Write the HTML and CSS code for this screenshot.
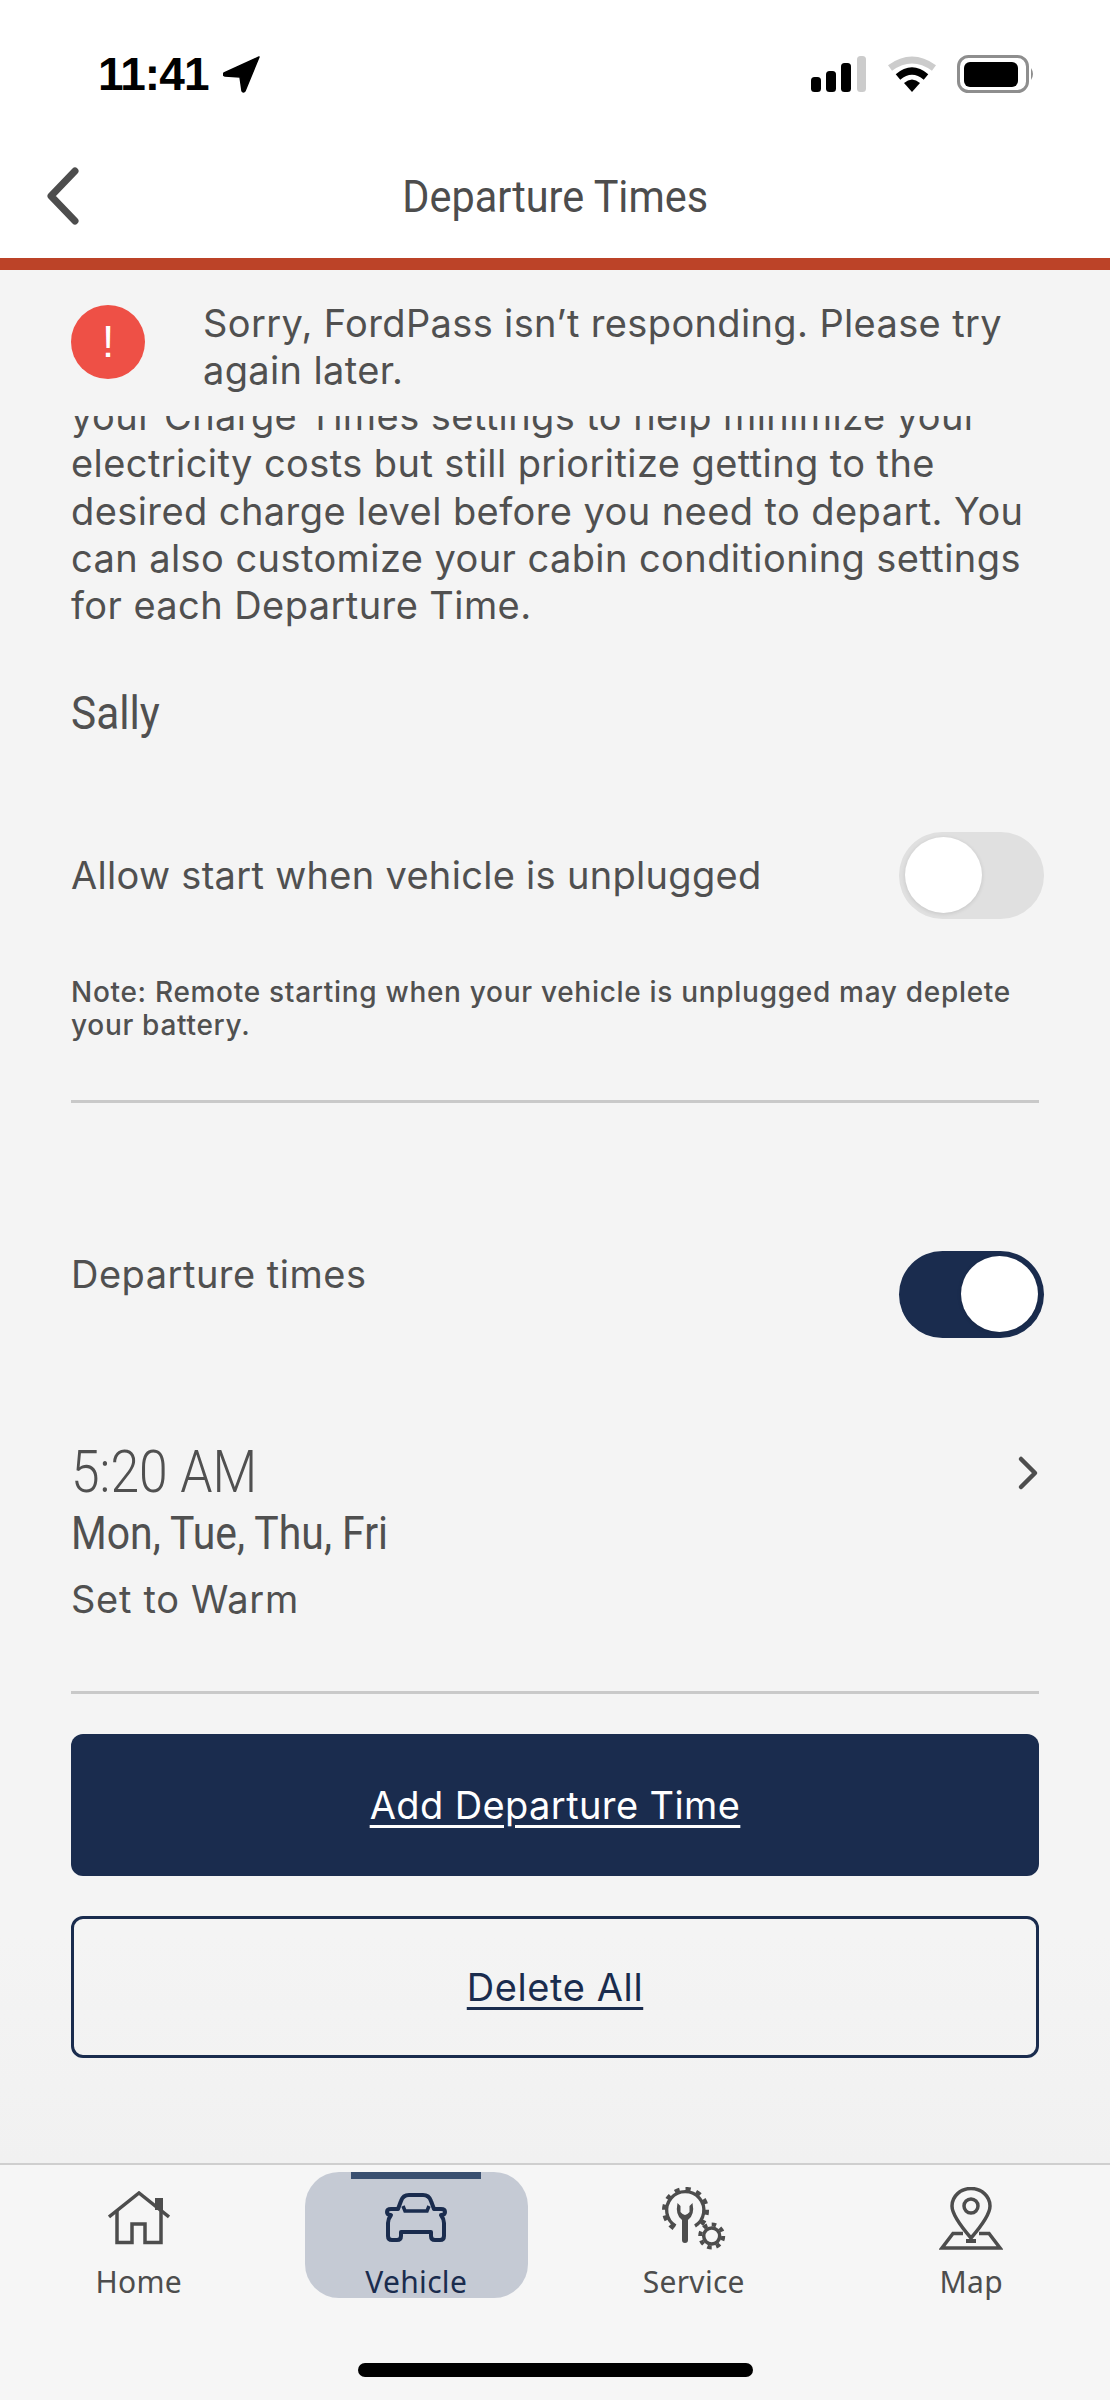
FILE: index.html
```html
<!DOCTYPE html>
<html lang="en">
<head>
<meta charset="utf-8">
<title>Departure Times</title>
<link rel="stylesheet" href="styles.css">
</head>
<body>
<div class="screen">
  <div class="status">
    <div class="status-left">
      <span class="clock">11:41</span>
      <svg class="arrow" width="38" height="37" viewBox="0 0 38 37"><path d="M36 1 L1 17 Q-1 19 2 20 L17 21 L19 35 Q20 37 22 35 Z" fill="#000" stroke="#000" stroke-width="1.5" stroke-linejoin="round"/></svg>
    </div>
    <div class="status-right">
      <svg class="signal" width="56" height="36" viewBox="0 0 56 36"><rect x="0" y="21" width="10" height="15" rx="3.5" fill="#000"/><rect x="15" y="15" width="10" height="21" rx="3.5" fill="#000"/><rect x="30" y="7" width="10" height="29" rx="3.5" fill="#000"/><rect x="46" y="0" width="9" height="36" rx="3.5" fill="#ccc"/></svg>
      <svg class="wifi" width="48" height="36" viewBox="0 0 48 36"><path d="M2 12 Q24 -4 46 12" fill="none" stroke="#ccc" stroke-width="7"/><path d="M10 21 Q24 9 38 21" fill="none" stroke="#000" stroke-width="7"/><path d="M16 27 Q24 20 32 27 L24 36 Z" fill="#000"/></svg>
      <svg class="battery" width="78" height="38" viewBox="0 0 78 38"><rect x="1.5" y="1.5" width="69" height="35" rx="10" fill="none" stroke="#8e8e8e" stroke-width="3"/><rect x="7" y="7" width="54" height="25" rx="6" fill="#000"/><path d="M74 13 Q78 19 74 25 Z" fill="#8e8e8e"/></svg>
    </div>
  </div>
  <header class="topbar">
    <svg class="back" width="33" height="58" viewBox="0 0 33 58"><path d="M29 4 L5 29 L29 54" fill="none" stroke="#4d4d4d" stroke-width="7" stroke-linecap="round" stroke-linejoin="round"/></svg>
    <h1 class="title">Departure Times</h1>
  </header>
  <div class="redbar"></div>
  <main class="content">
    <div class="alert">
      <div class="alert-icon">!</div>
      <p class="alert-text">Sorry, FordPass isn’t responding. Please try again later.</p>
    </div>
    <div class="scroll">
      <p class="intro">your Charge Times settings to help minimize your electricity costs but still prioritize getting to the desired charge level before you need to depart. You can also customize your cabin conditioning settings for each Departure Time.</p>
      <h2 class="name">Sally</h2>
      <div class="row row-allow">
        <span class="label">Allow start when vehicle is unplugged</span>
        <span class="toggle"><span class="knob"></span></span>
      </div>
      <p class="note">Note: Remote starting when your vehicle is unplugged may deplete your battery.</p>
      <div class="rule"></div>
      <div class="row row-dep">
        <span class="label label-dep">Departure times</span>
        <span class="toggle toggle-on"><span class="knob"></span></span>
      </div>
      <div class="entry">
        <div class="entry-info">
          <div class="entry-time">5:20 AM</div>
          <div class="entry-days">Mon, Tue, Thu, Fri</div>
          <div class="entry-mode">Set to Warm</div>
        </div>
        <svg class="chev" width="22" height="36" viewBox="0 0 22 36"><path d="M4 4 L18 18 L4 32" fill="none" stroke="#4d4d4d" stroke-width="4.5" stroke-linecap="round" stroke-linejoin="round"/></svg>
      </div>
      <div class="rule"></div>
      <a class="btn btn-primary">Add Departure Time</a>
      <a class="btn btn-outline">Delete All</a>
    </div>
  </main>
  <nav class="nav">
    <div class="tabs">
      <div class="tab">
        <span class="tab-icon"><svg width="62" height="54" viewBox="0 0 62 54"><path d="M1 26 L31 2 L61 26" fill="none" stroke="#4d4d4d" stroke-width="3.5"/><path d="M9 20 V51.5 H24 V33 H37 V51.5 H53 V7" fill="none" stroke="#4d4d4d" stroke-width="3.5"/><rect x="47" y="7" width="8" height="12" fill="#4d4d4d"/></svg></span>
        <span class="tab-label">Home</span>
      </div>
      <div class="tab tab-active">
        <span class="tab-mark"></span>
        <span class="tab-icon"><svg width="62" height="50" viewBox="0 0 62 50"><path d="M13 16 L16 8 Q18 2 24 2 H38 Q44 2 46 8 L49 16 H56 Q60 16 60 19 Q60 22 56 22 Q59 26 59 30 V43 Q59 47 55 47 H50 Q46 47 46 43 V39 H16 V43 Q16 47 12 47 H7 Q3 47 3 43 V30 Q3 26 6 22 Q2 22 2 19 Q2 16 6 16 Z" fill="none" stroke="#1a2c4e" stroke-width="4" stroke-linejoin="round"/><path d="M18 13 L20 18 H42 L44 13" fill="none" stroke="#1a2c4e" stroke-width="3.5"/></svg></span>
        <span class="tab-label">Vehicle</span>
      </div>
      <div class="tab">
        <span class="tab-icon"><svg width="64" height="63" viewBox="0 0 64 63" fill="none" stroke="#4d4d4d"><path d="M13.5 39 A18.6 18.6 0 1 1 33 39" stroke-width="3.3"/><path d="M12 41 A21 21 0 1 1 35 41" stroke-width="5" pathLength="60" stroke-dasharray="2.8 3.2"/><path d="M15.5 16 Q13 28 20 33 V53 Q20 56 23 56 Q26 56 26 53 V33 Q33 28 30.5 16 L27.5 19 V25 Q25 28 23 28 Q21 28 18.5 25 V19 Z" fill="#4d4d4d" stroke="none"/><circle cx="49.7" cy="49" r="8" stroke-width="3.5"/><circle cx="49.7" cy="49" r="11.5" stroke-width="4" pathLength="48" stroke-dasharray="3 3"/></svg></span>
        <span class="tab-label">Service</span>
      </div>
      <div class="tab">
        <span class="tab-icon"><svg width="64" height="63" viewBox="0 0 64 63" fill="none" stroke="#4d4d4d" stroke-width="3.5"><path d="M32 51 Q13 29 13 19 A19 17.5 0 0 1 51 19 Q51 29 32 51 Z" stroke-linejoin="round"/><circle cx="32" cy="19" r="7"/><path d="M24 46.5 H14 L3 61 H61 L50 46.5 H40"/><path d="M27 54 H37" stroke-width="4"/></svg></span>
        <span class="tab-label">Map</span>
      </div>
    </div>
    <div class="home-bar"></div>
  </nav>
</div>
</body>
</html>
```

FILE: styles.css
```css
* { box-sizing: border-box; }
html, body { margin: 0; padding: 0; }
body { width: 1110px; height: 2400px; overflow: hidden; background: #f4f4f4; font-family: Inter, "Liberation Sans", sans-serif; color: #505050; }
.screen { width: 1110px; height: 2400px; display: flex; flex-direction: column; }

.status { height: 130px; background: #fff; display: flex; justify-content: space-between; padding: 55px 75px 0 98px; flex: none; }
.status-left { display: flex; align-items: flex-start; gap: 14px; height: 38px; }
.clock { font: 700 46px/38px "Liberation Sans", sans-serif; color: #000; letter-spacing: -0.9px; }
.arrow { margin-top: 1px; }
.status-right { display: flex; align-items: flex-start; }
.signal { margin: 1px 21px 0 0; }
.wifi { margin: 1px 21px 0 0; }

.topbar { height: 128px; background: #fff; flex: none; display: flex; align-items: center; justify-content: center; position: relative; }
.back { position: absolute; left: 46px; top: 37px; }
.title { margin: 6px 0 0; font: 400 45px/60px Roboto, sans-serif; color: #4d4d4d; transform: scaleX(.92); }
.redbar { height: 12px; background: #bc4328; flex: none; }

.content { flex: 1; min-height: 0; display: flex; flex-direction: column; background: linear-gradient(#f4f4f4 88%, #f1f1f1); }
.alert { height: 146px; flex: none; display: flex; align-items: flex-start; padding: 35px 71px 0; gap: 58px; }
.alert-icon { width: 74px; height: 74px; border-radius: 50%; background: #ee5046; color: #fff; font: 400 44px/74px "Liberation Sans", sans-serif; text-align: center; flex: none; }
.alert-text { margin: -5px 0 0; font-size: 38px; line-height: 47px; letter-spacing: 0.36px; }

.scroll { flex: 1; min-height: 0; overflow: hidden; padding: 0 71px; }
.intro { margin: -23px 0 0; font-size: 38px; line-height: 47.3px; letter-spacing: 0.42px; }
.name { margin: 57px 0 0; font: 400 46px/54px Roboto, sans-serif; transform: scaleX(.92); transform-origin: left center; }
.row { display: flex; justify-content: space-between; }
.row-allow { align-items: center; margin: 92px -5px 0 0; }
.label { font-size: 38px; line-height: 47px; letter-spacing: 0.3px; }
.label-dep { letter-spacing: 0.5px; }
.toggle { width: 145px; height: 87px; border-radius: 44px; background: #e0e0e0; padding: 5px 6px; display: flex; flex: none; }
.knob { width: 77px; height: 76px; border-radius: 50%; background: #fff; box-shadow: 0 1px 4px rgba(0,0,0,.12); }
.toggle-on { background: #1a2c4e; justify-content: flex-end; }
.note { margin: 57px 0 0; font-size: 28px; line-height: 33px; font-weight: 500; letter-spacing: 0.7px; }
.rule { height: 3px; background: #c9c9c9; }
.note + .rule { margin-top: 58px; }
.row-dep { margin: 148px -5px 0 0; align-items: flex-start; }
.entry { display: flex; justify-content: space-between; margin-top: 99px; }
.entry-time { font: 300 60px/70px Roboto, sans-serif; transform: scaleX(.86); transform-origin: left center; }
.entry-days { font: 400 46px/52px Roboto, sans-serif; transform: scaleX(.89); transform-origin: left center; }
.entry-mode { font-size: 38px; line-height: 47px; margin-top: 17px; letter-spacing: 0.7px; }
.chev { margin-top: 18px; }
.entry + .rule { margin-top: 68px; }
.btn { display: flex; align-items: center; justify-content: center; height: 142px; border-radius: 12px; font-size: 38px; text-decoration: underline; text-underline-offset: 6px; letter-spacing: 0.4px; }
.btn-primary { background: #1a2c4e; color: #fff; margin-top: 40px; }
.btn-outline { border: 3px solid #1a2c4e; color: #1a2c4e; margin-top: 40px; letter-spacing: 0.6px; }

.nav { height: 237px; flex: none; background: #f6f6f6; border-top: 2px solid #cfcfcf; }
.tabs { display: grid; grid-template-columns: repeat(4, 1fr); height: 126px; margin-top: 7px; }
.tab { display: flex; flex-direction: column; align-items: center; position: relative; }
.tab-icon { height: 94px; padding-bottom: 2px; display: flex; align-items: center; justify-content: center; }
.tab-label { font: 400 30px/32px "Noto Sans", sans-serif; color: #4d4d4d; letter-spacing: 0.3px; }
.tab-active { margin: 0 27px; background: #c5cad4; border-radius: 34px; }
.tab-active .tab-label { color: #1a2c4e; }
.tab-mark { position: absolute; top: 0; left: 46px; width: 130px; height: 7px; background: #3a5070; }
.home-bar { width: 395px; height: 14px; border-radius: 7px; background: #000; margin: 65px auto 0; }
```
